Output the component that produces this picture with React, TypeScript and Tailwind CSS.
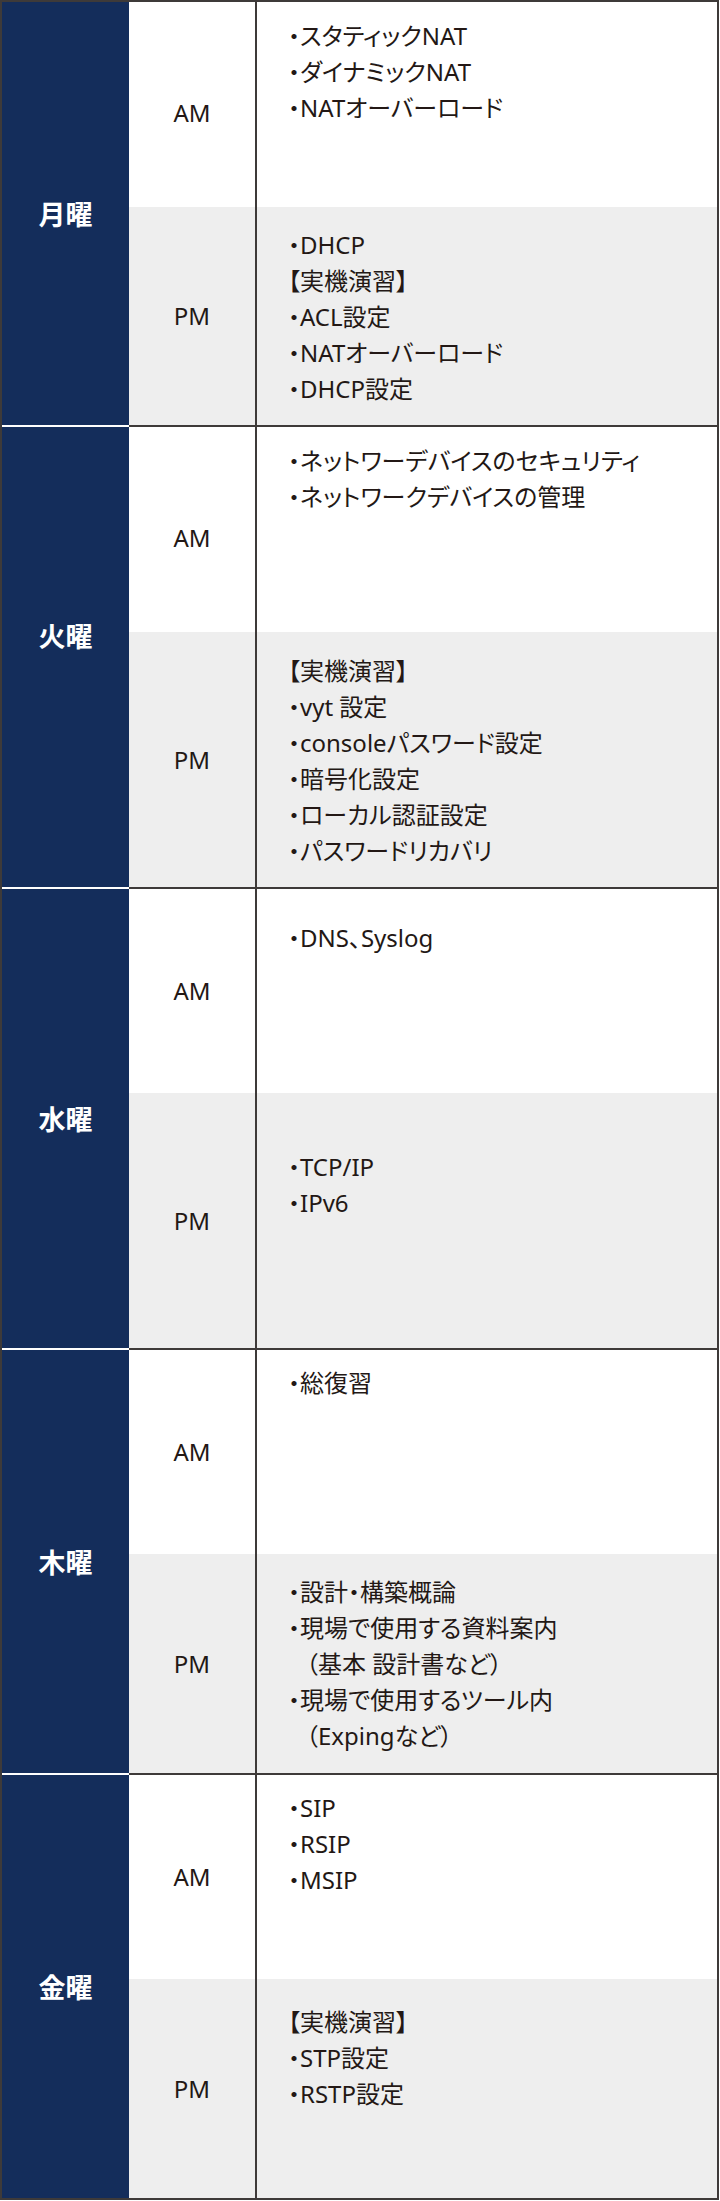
import React from "react"

interface Slot {
    label: "AM" | "PM"
    h: string
    pt: string
    labelPt?: string
    lines: { text: string; indent?: boolean }[]
}

interface Day {
    day: string
    dayPad?: string
    slots: Slot[]
}

const l = (text: string, indent = false) => ({ text, indent })

const schedule: Day[] = [
    {
        day: "月曜",
        slots: [
            {
                label: "AM",
                h: "h-[205px]",
                pt: "pt-[16px]",
                labelPt: "pt-4",
                lines: [l("・スタティックNAT"), l("・ダイナミックNAT"), l("・NATオーバーロード")],
            },
            {
                label: "PM",
                h: "h-[218px]",
                pt: "pt-[20px]",
                lines: [
                    l("・DHCP"),
                    l("【実機演習】"),
                    l("・ACL設定"),
                    l("・NATオーバーロード"),
                    l("・DHCP設定"),
                ],
            },
        ],
    },
    {
        day: "火曜",
        dayPad: "pb-[44px]",
        slots: [
            {
                label: "AM",
                h: "h-[205px]",
                pt: "pt-[16px]",
                labelPt: "pt-4",
                lines: [l("・ネットワーデバイスのセキュリティ"), l("・ネットワークデバイスの管理")],
            },
            {
                label: "PM",
                h: "h-[255px]",
                pt: "pt-[21px]",
                lines: [
                    l("【実機演習】"),
                    l("・vyt 設定"),
                    l("・consoleパスワード設定"),
                    l("・暗号化設定"),
                    l("・ローカル認証設定"),
                    l("・パスワードリカバリ"),
                ],
            },
        ],
    },
    {
        day: "水曜",
        slots: [
            {
                label: "AM",
                h: "h-[204px]",
                pt: "pt-[31px]",
                lines: [l("・DNS、Syslog")],
            },
            {
                label: "PM",
                h: "h-[255px]",
                pt: "pt-[56px]",
                lines: [l("・TCP/IP"), l("・IPv6")],
            },
        ],
    },
    {
        day: "木曜",
        slots: [
            {
                label: "AM",
                h: "h-[204px]",
                pt: "pt-[15px]",
                lines: [l("・総復習")],
            },
            {
                label: "PM",
                h: "h-[219px]",
                pt: "pt-[20px]",
                lines: [
                    l("・設計・構築概論"),
                    l("・現場で使用する資料案内"),
                    l("（基本 設計書など）", true),
                    l("・現場で使用するツール内"),
                    l("（Expingなど）", true),
                ],
            },
        ],
    },
    {
        day: "金曜",
        slots: [
            {
                label: "AM",
                h: "h-[204px]",
                pt: "pt-[15px]",
                lines: [l("・SIP"), l("・RSIP"), l("・MSIP")],
            },
            {
                label: "PM",
                h: "h-[219px]",
                pt: "pt-[25px]",
                lines: [l("【実機演習】"), l("・STP設定"), l("・RSTP設定")],
            },
        ],
    },
]

export default function App() {
    return (
        <div className="w-[719px] border-2 border-[#3e3a39] bg-white text-[#231815] font-['Noto_Sans','Noto_Sans_CJK_JP',sans-serif]">
            {schedule.map((d, i) => (
                <div key={d.day} className="flex">
                    {/* day label */}
                    <div
                        className={`w-[127px] shrink-0 bg-[#142d5b] flex items-center justify-center ${
                            i > 0 ? "border-t-2 border-white" : ""
                        } ${d.dayPad ?? ""}`}
                    >
                        <span className="text-[27px] font-bold text-white leading-none font-['Noto_Sans_CJK_JP',sans-serif]">
                            {d.day}
                        </span>
                    </div>

                    {/* AM / PM rows */}
                    <div className={`flex-1 ${i > 0 ? "border-t-2 border-[#3e3a39]" : ""}`}>
                        {d.slots.map((s) => (
                            <div
                                key={s.label}
                                className={`flex ${s.h} ${s.label === "PM" ? "bg-[#eeeeee]" : "bg-white"}`}
                            >
                                <div
                                    className={`w-[128px] shrink-0 flex items-center justify-center text-[24px] border-r-2 border-[#3e3a39] ${
                                        s.labelPt ?? ""
                                    }`}
                                >
                                    {s.label}
                                </div>
                                <div
                                    className={`flex-1 pl-[31px] ${s.pt} text-[24px] leading-[36px] [font-feature-settings:'palt']`}
                                >
                                    {s.lines.map((ln, k) => (
                                        <div key={k} className={ln.indent ? "pl-[18px]" : ""}>
                                            {ln.text}
                                        </div>
                                    ))}
                                </div>
                            </div>
                        ))}
                    </div>
                </div>
            ))}
        </div>
    )
}
